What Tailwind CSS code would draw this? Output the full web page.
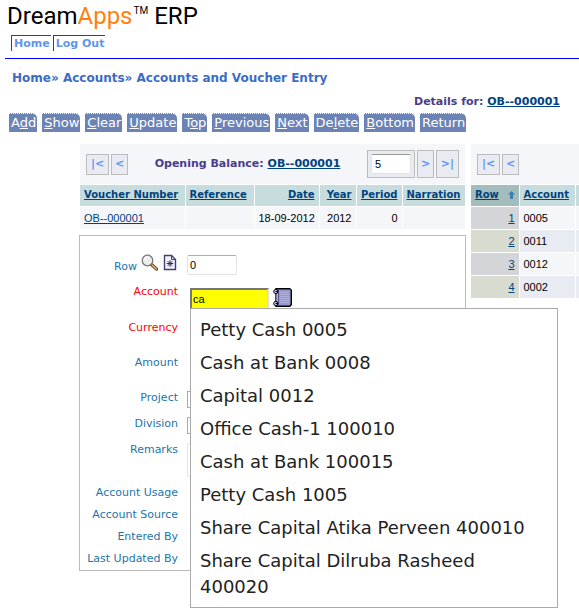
<!DOCTYPE html>
<html lang="en">
<head>
  <meta charset="UTF-8" />
  <meta name="viewport" content="width=device-width, initial-scale=1.0"/>
  <title>DreamApps ERP - Accounts and Voucher Entry</title>
  <script src="https://cdn.jsdelivr.net/npm/@tailwindcss/browser@4"></script>
</head>
<body class="bg-white min-h-screen text-[11px] leading-4 font-['DejaVu_Sans',sans-serif]">
  <header class="pl-[5px]">
    <h1 class="flex pl-[2px] text-2xl leading-8 text-black font-['Roboto',sans-serif]">
      <span>Dream<span class="text-[#ff7f11]">Apps</span></span>
      <span class="text-[10px] leading-5 ml-[1px] pt-[1px]">TM</span>
      <span class="ml-[6px]">ERP</span>
    </h1>
    <nav class="flex gap-[2px] mt-[3px] pl-[6px] pb-[7px] font-bold text-[#6495ed] border-b border-[#0000ff]">
      <a href="#" class="border-l border-t border-[#007000] pl-[2px] pr-[1px] h-4">Home</a>
      <a href="#" class="border-l border-t border-[#007000] pl-[2px] pr-[1px] h-4">Log Out</a>
    </nav>
  </header>

  <div class="mt-[11px] pl-3 text-xs font-bold text-[#3b6cc5]">
    <a href="#">Home</a>» <a href="#">Accounts</a>» <a href="#">Accounts and Voucher Entry</a>
  </div>
  <div class="mt-2 pr-[19px] text-right font-bold text-[#483d8b]">Details for: <a href="#" class="text-[#00437f] underline">OB--000001</a></div>

  <div class="flex gap-[5px] mt-[3px] pl-[9px] text-[13px] leading-[18px] text-white">
    <button class="bg-[#6c84b5] h-[19px] pl-[2px] pr-[1px] border-t border-dotted border-white rounded-tr-[5px]">A<u>d</u>d</button>
    <button class="bg-[#6c84b5] h-[19px] pl-[2px] pr-[1px] border-t border-dotted border-white rounded-tr-[5px]"><u>S</u>how</button>
    <button class="bg-[#6c84b5] h-[19px] pl-[2px] pr-[1px] border-t border-dotted border-white rounded-tr-[5px]"><u>C</u>lear</button>
    <button class="bg-[#6c84b5] h-[19px] pl-[2px] pr-[1px] border-t border-dotted border-white rounded-tr-[5px]"><u>U</u>pdate</button>
    <button class="bg-[#6c84b5] h-[19px] pl-[2px] pr-[1px] border-t border-dotted border-white rounded-tr-[5px]">T<u>o</u>p</button>
    <button class="bg-[#6c84b5] h-[19px] pl-[2px] pr-[1px] border-t border-dotted border-white rounded-tr-[5px]"><u>P</u>revious</button>
    <button class="bg-[#6c84b5] h-[19px] pl-[2px] pr-[1px] border-t border-dotted border-white rounded-tr-[5px]"><u>N</u>ext</button>
    <button class="bg-[#6c84b5] h-[19px] pl-[2px] pr-[1px] border-t border-dotted border-white rounded-tr-[5px]">De<u>l</u>ete</button>
    <button class="bg-[#6c84b5] h-[19px] pl-[2px] pr-[1px] border-t border-dotted border-white rounded-tr-[5px]"><u>B</u>ottom</button>
    <button class="bg-[#6c84b5] h-[19px] pl-[2px] pr-[1px] border-t border-dotted border-white rounded-tr-[5px]">Return</button>
  </div>

  <main class="flex mt-3 pl-[79px] gap-[5px]">
    <div class="shrink-0 w-[387px]">
      <!-- vouchers -->
      <div class="mx-[1px]">
        <div class="flex items-center justify-between h-[40px] px-[6px] bg-[#f4f6f9] font-bold">
          <div class="flex gap-[2px] text-[#6495ed]">
            <button class="w-[23px] h-[21px] border border-[#bbbbbb] bg-[#e8ebf1]">|&lt;</button>
            <button class="w-[17px] h-[21px] border border-[#bbbbbb] bg-[#e8ebf1]">&lt;</button>
          </div>
          <div class="text-[#483d8b]">Opening Balance: <a href="#" class="text-[#00437f] underline">OB--000001</a></div>
          <div class="flex gap-[2px] text-[#6495ed]">
            <div class="border border-[#bbbbbb] bg-[#e8ebf1] p-[3px] flex">
              <input type="text" value="5" aria-label="Page size" class="w-10 h-5 px-[3px] bg-white border border-[#e0e3e8] border-t-[#999999] rounded-[2px] text-black font-normal text-[11px] font-['Liberation_Sans',sans-serif]" />
            </div>
            <button class="w-[17px] h-7 border border-[#bbbbbb] bg-[#e8ebf1]">&gt;</button>
            <button class="w-[23px] h-7 border border-[#bbbbbb] bg-[#e8ebf1]">&gt;|</button>
          </div>
        </div>
        <table class="w-full table-fixed border-collapse mt-[1px] text-right">
          <thead class="text-[10px] text-[#00437f] underline">
            <tr class="h-[21px] bg-[#c7dcdc]">
              <th class="w-[105px] px-1 text-left border-r border-white">Voucher Number</th>
              <th class="w-[69px] px-1 text-left border-r border-white">Reference</th>
              <th class="w-[65px] px-1 border-r border-white">Date</th>
              <th class="w-[37px] px-1 border-r border-white">Year</th>
              <th class="w-[46px] px-1 border-r border-white">Period</th>
              <th class="px-1 text-left">Narration</th>
            </tr>
          </thead>
          <tbody class="font-['Liberation_Sans',sans-serif] text-black">
            <tr class="h-[23px] bg-[#f4f6f9] border-t border-white">
              <td class="px-1 text-left border-r border-white"><a href="#" class="text-[#00437f] underline">OB--000001</a></td>
              <td class="border-r border-white"></td>
              <td class="px-1 whitespace-nowrap border-r border-white">18-09-2012</td>
              <td class="px-1 border-r border-white">2012</td>
              <td class="px-1 border-r border-white">0</td>
              <td></td>
            </tr>
          </tbody>
        </table>
      </div>

      <!-- voucher row form -->
      <form class="mt-[6px] border border-[#bbbbbb] pt-[18px] text-[#2374ab]">
        <div class="flex gap-[9px] h-[30px]">
          <div class="w-[98px] flex justify-end items-start gap-1">
            <label for="row" class="pt-[5px]">Row</label>
            <svg class="w-[17px] h-[17px]" viewBox="0 0 17 17" fill="none">
              <path d="M10.5 10.5l5 4.5" stroke="#6b4a2c" stroke-width="3.4" stroke-linecap="round"/>
              <path d="M11.5 11.3l3.8 3.5" stroke="#d9a066" stroke-width="1.8" stroke-linecap="round"/>
              <circle cx="6.5" cy="6.5" r="5.3" fill="#eceeee" stroke="#777777" stroke-width="1.3"/>
              <path d="M3.4 6a3.3 3.3 0 0 1 3-2.8" stroke="#ffffff" stroke-width="1.2"/>
            </svg>
            <svg class="w-[16px] h-[17px]" viewBox="0 0 16 17" fill="none">
              <path d="M2.5 1.5h7l4 4v10h-11z" fill="#f2f2fb" stroke="#3f3f77" stroke-width="1.4"/>
              <path d="M9.5 1.5v4h4" stroke="#3f3f77"/>
              <path d="M8 6.2v6.6M4.7 9.5h6.6M5.7 7.2l4.6 4.6M10.3 7.2l-4.6 4.6" stroke="#2b2b60"/>
            </svg>
          </div>
          <input id="row" type="text" value="0" class="w-[50px] h-5 mt-[1px] px-[2px] border border-[#e0e3ea] border-t-[#abadb3] rounded-[2px] text-black text-[11px] font-['Liberation_Sans',sans-serif]" />
        </div>
        <div class="flex gap-3 h-9">
          <label for="account" class="w-[98px] text-right text-[#ff0000]">Account</label>
          <div class="relative flex items-start gap-1 pt-1 h-6">
            <input id="account" type="text" value="ca" autocomplete="off" class="w-[79px] h-5 px-[1px] bg-[#ffff00] border-2 border-b-0 border-[#dddddd] border-t-[#777777] border-l-[#777777] text-black text-[11px] font-['Liberation_Sans',sans-serif]" />
            <button type="button" aria-label="Account list">
              <svg class="w-[19px] h-[19px]" viewBox="0 0 19 19" fill="none">
                <path d="M3 .7h13.8l1.5 1.5v14.300l-1.500 1.800H3z" fill="#9898d0" stroke="#000000" stroke-width="1.400"/>
                <path d="M7 4.500h9M7 6.500h9M7 8.500h9M7 10.500h9M7 12.500h9M7 14.500h9" stroke="#b0b0de"/>
                <path d="M5.500 2v15" stroke="#55558a"/>
                <circle cx="2.800" cy="3.500" r="2.100" fill="#c8c8ee" stroke="#000000"/>
                <circle cx="2.800" cy="15.500" r="2.100" fill="#c8c8ee" stroke="#000000"/>
                <path d="M2.500 3.500h2.500M2.500 15.500h2.500" stroke="#000000"/>
                <path d="M4 6v7" stroke="#c8c8ee"/>
              </svg>
            </button>
            <ul class="absolute left-0 top-full z-10 w-[368px] border border-[#aaaaaa] bg-white pl-[9px] pr-5 pt-2 pb-[7px] flex flex-col gap-[7px] text-lg leading-[26px] text-[#222222]">
              <li>Petty Cash 0005</li>
              <li>Cash at Bank 0008</li>
              <li>Capital 0012</li>
              <li>Office Cash-1 100010</li>
              <li>Cash at Bank 100015</li>
              <li>Petty Cash 1005</li>
              <li>Share Capital Atika Perveen 400010</li>
              <li>Share Capital Dilruba Rasheed 400020</li>
            </ul>
          </div>
        </div>
        <div class="h-[35px] w-[98px] text-right text-[#ff0000]">Currency</div>
        <div class="h-[35px] w-[98px] text-right">Amount</div>
        <div class="flex gap-[9px] h-[26px]">
          <label for="project" class="w-[98px] text-right">Project</label>
          <select id="project" class="w-[120px] h-[17px] mt-[1px] border border-[#aaaaaa]"><option></option></select>
        </div>
        <div class="flex gap-[9px] h-[26px]">
          <label for="division" class="w-[98px] text-right">Division</label>
          <select id="division" class="w-[120px] h-[17px] mt-[1px] border border-[#aaaaaa]"><option></option></select>
        </div>
        <div class="flex gap-[9px] h-[43px]">
          <label for="remarks" class="w-[98px] text-right">Remarks</label>
          <textarea id="remarks" class="w-[200px] h-[34px] mt-[1px] border border-[#e3e3ee] rounded-[2px] resize-none"></textarea>
        </div>
        <div class="w-[98px] pb-[3px] flex flex-col gap-[6px] text-right">
          <div>Account Usage</div>
          <div>Account Source</div>
          <div>Entered By</div>
          <div>Last Updated By</div>
        </div>
      </form>
    </div>

    <!-- voucher detail rows -->
    <div class="flex-1 min-w-0 overflow-hidden">
      <div class="flex items-center h-[40px] px-[6px] gap-[2px] bg-[#f4f6f9] font-bold text-[#6495ed]">
        <button class="w-[23px] h-[21px] border border-[#bbbbbb] bg-[#e8ebf1]">|&lt;</button>
        <button class="w-[17px] h-[21px] border border-[#bbbbbb] bg-[#e8ebf1]">&lt;</button>
      </div>
      <table class="w-full table-fixed border-collapse mt-[1px]">
        <thead class="text-[10px] text-left text-[#00437f]">
          <tr class="h-[21px] bg-[#c7dcdc]">
            <th class="w-[48px] px-1 bg-[#a3bcbc] border-r border-white">
              <div class="flex items-center justify-between">
                <span class="underline">Row</span>
                <svg class="w-[7px] h-2" viewBox="0 0 7 8"><path d="M3.500 0L7 3.500H5V8H2V3.500H0z" fill="#3a80b0"/></svg>
              </div>
            </th>
            <th class="w-[56px] px-1 underline border-r border-white">Account</th>
            <th></th>
          </tr>
        </thead>
        <tbody class="font-['Liberation_Sans',sans-serif] text-black">
          <tr class="h-[23px] bg-[#f4f6f9] border-t border-white">
            <td class="px-1 text-right bg-[#d4d5d8] border-r border-white"><a href="#" class="text-[#00437f] underline">1</a></td>
            <td class="px-1 border-r border-white">0005</td>
            <td></td>
          </tr>
          <tr class="h-[23px] bg-[#e8ebf1] border-t border-white">
            <td class="px-1 text-right bg-[#d8dbcf] border-r border-white"><a href="#" class="text-[#00437f] underline">2</a></td>
            <td class="px-1 border-r border-white">0011</td>
            <td></td>
          </tr>
          <tr class="h-[23px] bg-[#f4f6f9] border-t border-white">
            <td class="px-1 text-right bg-[#d4d5d8] border-r border-white"><a href="#" class="text-[#00437f] underline">3</a></td>
            <td class="px-1 border-r border-white">0012</td>
            <td></td>
          </tr>
          <tr class="h-[23px] bg-[#e8ebf1] border-t border-white">
            <td class="px-1 text-right bg-[#d8dbcf] border-r border-white"><a href="#" class="text-[#00437f] underline">4</a></td>
            <td class="px-1 border-r border-white">0002</td>
            <td></td>
          </tr>
        </tbody>
      </table>
    </div>
  </main>
</body>
</html>
